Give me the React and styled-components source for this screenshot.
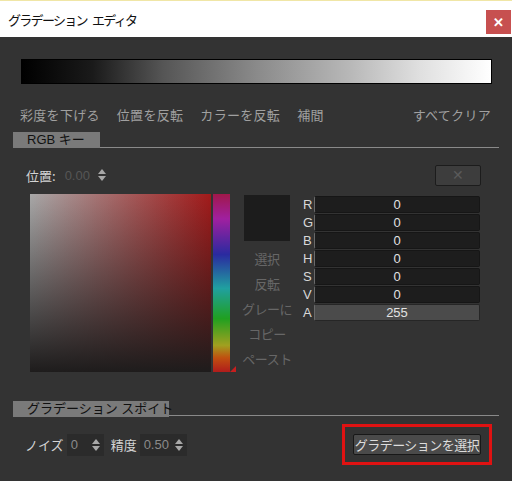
import React from 'react';
import styled, { createGlobalStyle } from 'styled-components';

const GlobalStyle = createGlobalStyle`
	html, body {
		margin: 0;
		padding: 0;
		background: #333333;
	}
	* {
		box-sizing: border-box;
	}
`;

const FONT = `"Liberation Sans", "Noto Sans CJK JP", sans-serif`;

const Window = styled.div`
	width: 512px;
	height: 481px;
	display: flex;
	flex-direction: column;
	font-family: ${FONT};
	font-size: 13px;
	background: #333333;
	overflow: hidden;
`;

const TitleBar = styled.div`
	height: 37px;
	flex: none;
	display: flex;
	align-items: center;
	justify-content: space-between;
	background: #ffffff;
	border-top: 1px solid #f0e6a6;
	padding-left: 8px;
	padding-right: 1px;
`;

const Title = styled.span`
	font-family: "Noto Sans CJK JP", sans-serif;
	font-size: 13px;
	color: #111;
	letter-spacing: -1.7px;
	word-spacing: 4px;
`;

const CloseButton = styled.div`
	width: 25px;
	height: 24px;
	background: #c75050;
	color: #fff;
	font-size: 13px;
	font-weight: bold;
	display: flex;
	align-items: center;
	justify-content: center;
	margin-top: 6px;
`;

const Body = styled.div`
	flex: 1;
	display: flex;
	flex-direction: column;
`;

const GradientBar = styled.div`
	margin: 22px 0 0 21px;
	width: 471px;
	height: 25px;
	border: 1px solid #000;
	background: linear-gradient(to right, #000 0%, #1a1a1a 15%, #555 30%, #8a8a8a 50%, #b8b8b8 70%, #e0e0e0 85%, #fff 100%);
`;

const Toolbar = styled.div`
	display: flex;
	align-items: center;
	height: 16px;
	margin: 23px 21px 0 20px;
	gap: 17px;
`;

const ToolItem = styled.span`
	font-family: "Noto Sans CJK JP", sans-serif;
	font-size: 13px;
	color: #a0a0a0;
	line-height: 16px;
	letter-spacing: 0.3px;
	margin-left: ${p => (p.push ? 'auto' : '0')};
`;

const SectionHeader = styled.div`
	display: flex;
	align-items: flex-end;
	margin: ${p => p.top}px 13px 0 13px;
	height: 16px;
`;

const Tab = styled.div`
	width: ${p => p.width}px;
	height: 16px;
	background: #7a7a7a;
	color: #111;
	font-size: 13px;
	line-height: 16px;
	padding-left: ${p => p.pad}px;
	white-space: nowrap;
`;

const HeaderLine = styled.div`
	flex: 1;
	height: 1px;
	background: #8a8a8a;
	margin-bottom: ${p => p.drop}px;
`;

const PositionRow = styled.div`
	display: flex;
	align-items: center;
	margin: 16px 31px 0 26px;
	height: 22px;
`;

const Label = styled.span`
	font-family: "Noto Sans CJK JP", sans-serif;
	color: #d4d4d4;
	font-size: 13px;
`;

const DimValue = styled.span`
	color: #565656;
	font-size: 13px;
	margin-left: 9px;
	width: 33px;
`;

const RemoveButton = styled.div`
	margin-left: auto;
	width: 46px;
	height: 21px;
	background: #3d3d3d;
	border: 1px solid #1c1c1c;
	border-radius: 2px;
	color: #5a5a5a;
	font-size: 14px;
	display: flex;
	align-items: center;
	justify-content: center;
`;

const KeyArea = styled.div`
	display: flex;
	margin: 8px 0 0 30px;
	height: 179px;
`;

const ColorField = styled.div`
	width: 181px;
	height: 178px;
	background:
		linear-gradient(to bottom, rgba(30, 28, 28, 0) 0%, #1e1c1c 100%),
		linear-gradient(to right, #a8a8a8 0%, #a21a1a 100%);
`;

const HueStrip = styled.div`
	position: relative;
	width: 17px;
	height: 178px;
	margin-left: 2px;
	background: linear-gradient(
		to bottom,
		#a0184a 0%,
		#a020a0 14%,
		#2a2aa0 34%,
		#20a0a0 53%,
		#20a020 70%,
		#a0a020 85%,
		#c05010 92%,
		#b01c1c 100%
	);
`;

const HueMarker = styled.div`
	position: absolute;
	right: -6px;
	bottom: 0;
	width: 0;
	height: 0;
	border-left: 6px solid transparent;
	border-bottom: 6px solid #c81e1e;
`;

const SideColumn = styled.div`
	width: 46px;
	margin-left: 14px;
	display: flex;
	flex-direction: column;
	align-items: center;
`;

const Swatch = styled.div`
	width: 46px;
	height: 46px;
	margin-top: 1px;
	background: #1c1c1c;
`;

const SideButton = styled.span`
	font-family: "Noto Sans CJK JP", sans-serif;
	font-size: 13px;
	color: #676767;
	height: 25px;
	line-height: 25px;
	white-space: nowrap;
	letter-spacing: -0.5px;
	margin-top: ${p => (p.first ? '5px' : '0')};
`;

const Channels = styled.div`
	margin-left: 13px;
	display: grid;
	grid-template-columns: 11px 166px;
	grid-auto-rows: 17px;
	row-gap: 1px;
	align-content: start;
	margin-top: 2px;
`;

const ChannelLabel = styled.span`
	color: #d8d8d8;
	font-size: 13px;
	line-height: 17px;
`;

const ChannelField = styled.div`
	height: 17px;
	background: ${p => (p.light ? '#4b4b4b' : '#1d1d1d')};
	border: 1px solid ${p => (p.light ? '#262626' : '#161616')};
	border-left: 1px solid #6a6a6a;
	border-radius: 2px;
	color: #e2e2e2;
	font-size: 13px;
	line-height: 15px;
	text-align: center;
`;

const BottomRow = styled.div`
	display: flex;
	align-items: center;
	margin: 7px 20px 0 25px;
	height: 41px;
`;

const SpinField = styled.div`
	display: flex;
	align-items: center;
	width: ${p => p.width}px;
	height: 22px;
	margin-left: 3px;
	margin-right: ${p => p.gap}px;
	padding: 0 4px 0 4px;
	background: #2b2b2b;
	color: #8a8a8a;
	font-size: 13px;
	justify-content: space-between;
`;

const SelectFrame = styled.div`
	margin-left: auto;
	width: 150px;
	height: 41px;
	border: 3px solid #e01212;
	display: flex;
	align-items: center;
	justify-content: center;
`;

const SelectButton = styled.div`
	width: 128px;
	height: 21px;
	background: #4a4a4a;
	border: 1px solid #181818;
	border-radius: 2px;
	color: #dcdcdc;
	font-family: "Noto Sans CJK JP", sans-serif;
	font-size: 13px;
	line-height: 19px;
	text-align: center;
	white-space: nowrap;
	letter-spacing: -0.5px;
`;

// stacked up/down arrows used by numeric fields
const Spinner = ({ color = '#a8a8a8' }) => (
	<svg width="8" height="12" viewBox="0 0 8 12" style={{ display: 'block', flex: 'none' }}>
		<polygon points="4,0 8,5 0,5" fill={color} />
		<polygon points="0,7 8,7 4,12" fill={color} />
	</svg>
);

const channels = [
	['R', '0'],
	['G', '0'],
	['B', '0'],
	['H', '0'],
	['S', '0'],
	['V', '0'],
	['A', '255'],
];

const tools = ['彩度を下げる', '位置を反転', 'カラーを反転', '補間'];
const sideActions = ['選択', '反転', 'グレーに', 'コピー', 'ペースト'];

const App = () => {
	return (
		<Window>
			<GlobalStyle />
			<TitleBar>
				<Title>グラデーション エディタ</Title>
				<CloseButton>✕</CloseButton>
			</TitleBar>
			<Body>
				<GradientBar />
				<Toolbar>
					{tools.map(t => (
						<ToolItem key={t}>{t}</ToolItem>
					))}
					<ToolItem push>すべてクリア</ToolItem>
				</Toolbar>

				<SectionHeader top={9}>
					<Tab width={87} pad={14}>RGB キー</Tab>
					<HeaderLine drop={0} />
				</SectionHeader>

				<PositionRow>
					<Label>位置:</Label>
					<DimValue>0.00</DimValue>
					<Spinner />
					<RemoveButton>✕</RemoveButton>
				</PositionRow>

				<KeyArea>
					<ColorField />
					<HueStrip>
						<HueMarker />
					</HueStrip>
					<SideColumn>
						<Swatch />
						{sideActions.map((a, i) => (
							<SideButton key={a} first={i === 0}>{a}</SideButton>
						))}
					</SideColumn>
					<Channels>
						{channels.map(([name, value]) => (
							<React.Fragment key={name}>
								<ChannelLabel>{name}</ChannelLabel>
								<ChannelField light={name === 'A'}>{value}</ChannelField>
							</React.Fragment>
						))}
					</Channels>
				</KeyArea>

				<SectionHeader top={28}>
					<Tab width={156} pad={14}>グラデーション スポイト</Tab>
					<HeaderLine drop={1} />
				</SectionHeader>

				<BottomRow>
					<Label>ノイズ</Label>
					<SpinField width={37} gap={7}>
						<span>0</span>
						<Spinner />
					</SpinField>
					<Label>精度</Label>
					<SpinField width={47} gap={0}>
						<span>0.50</span>
						<Spinner />
					</SpinField>
					<SelectFrame>
						<SelectButton>グラデーションを選択</SelectButton>
					</SelectFrame>
				</BottomRow>
			</Body>
		</Window>
	);
};

export default App;
